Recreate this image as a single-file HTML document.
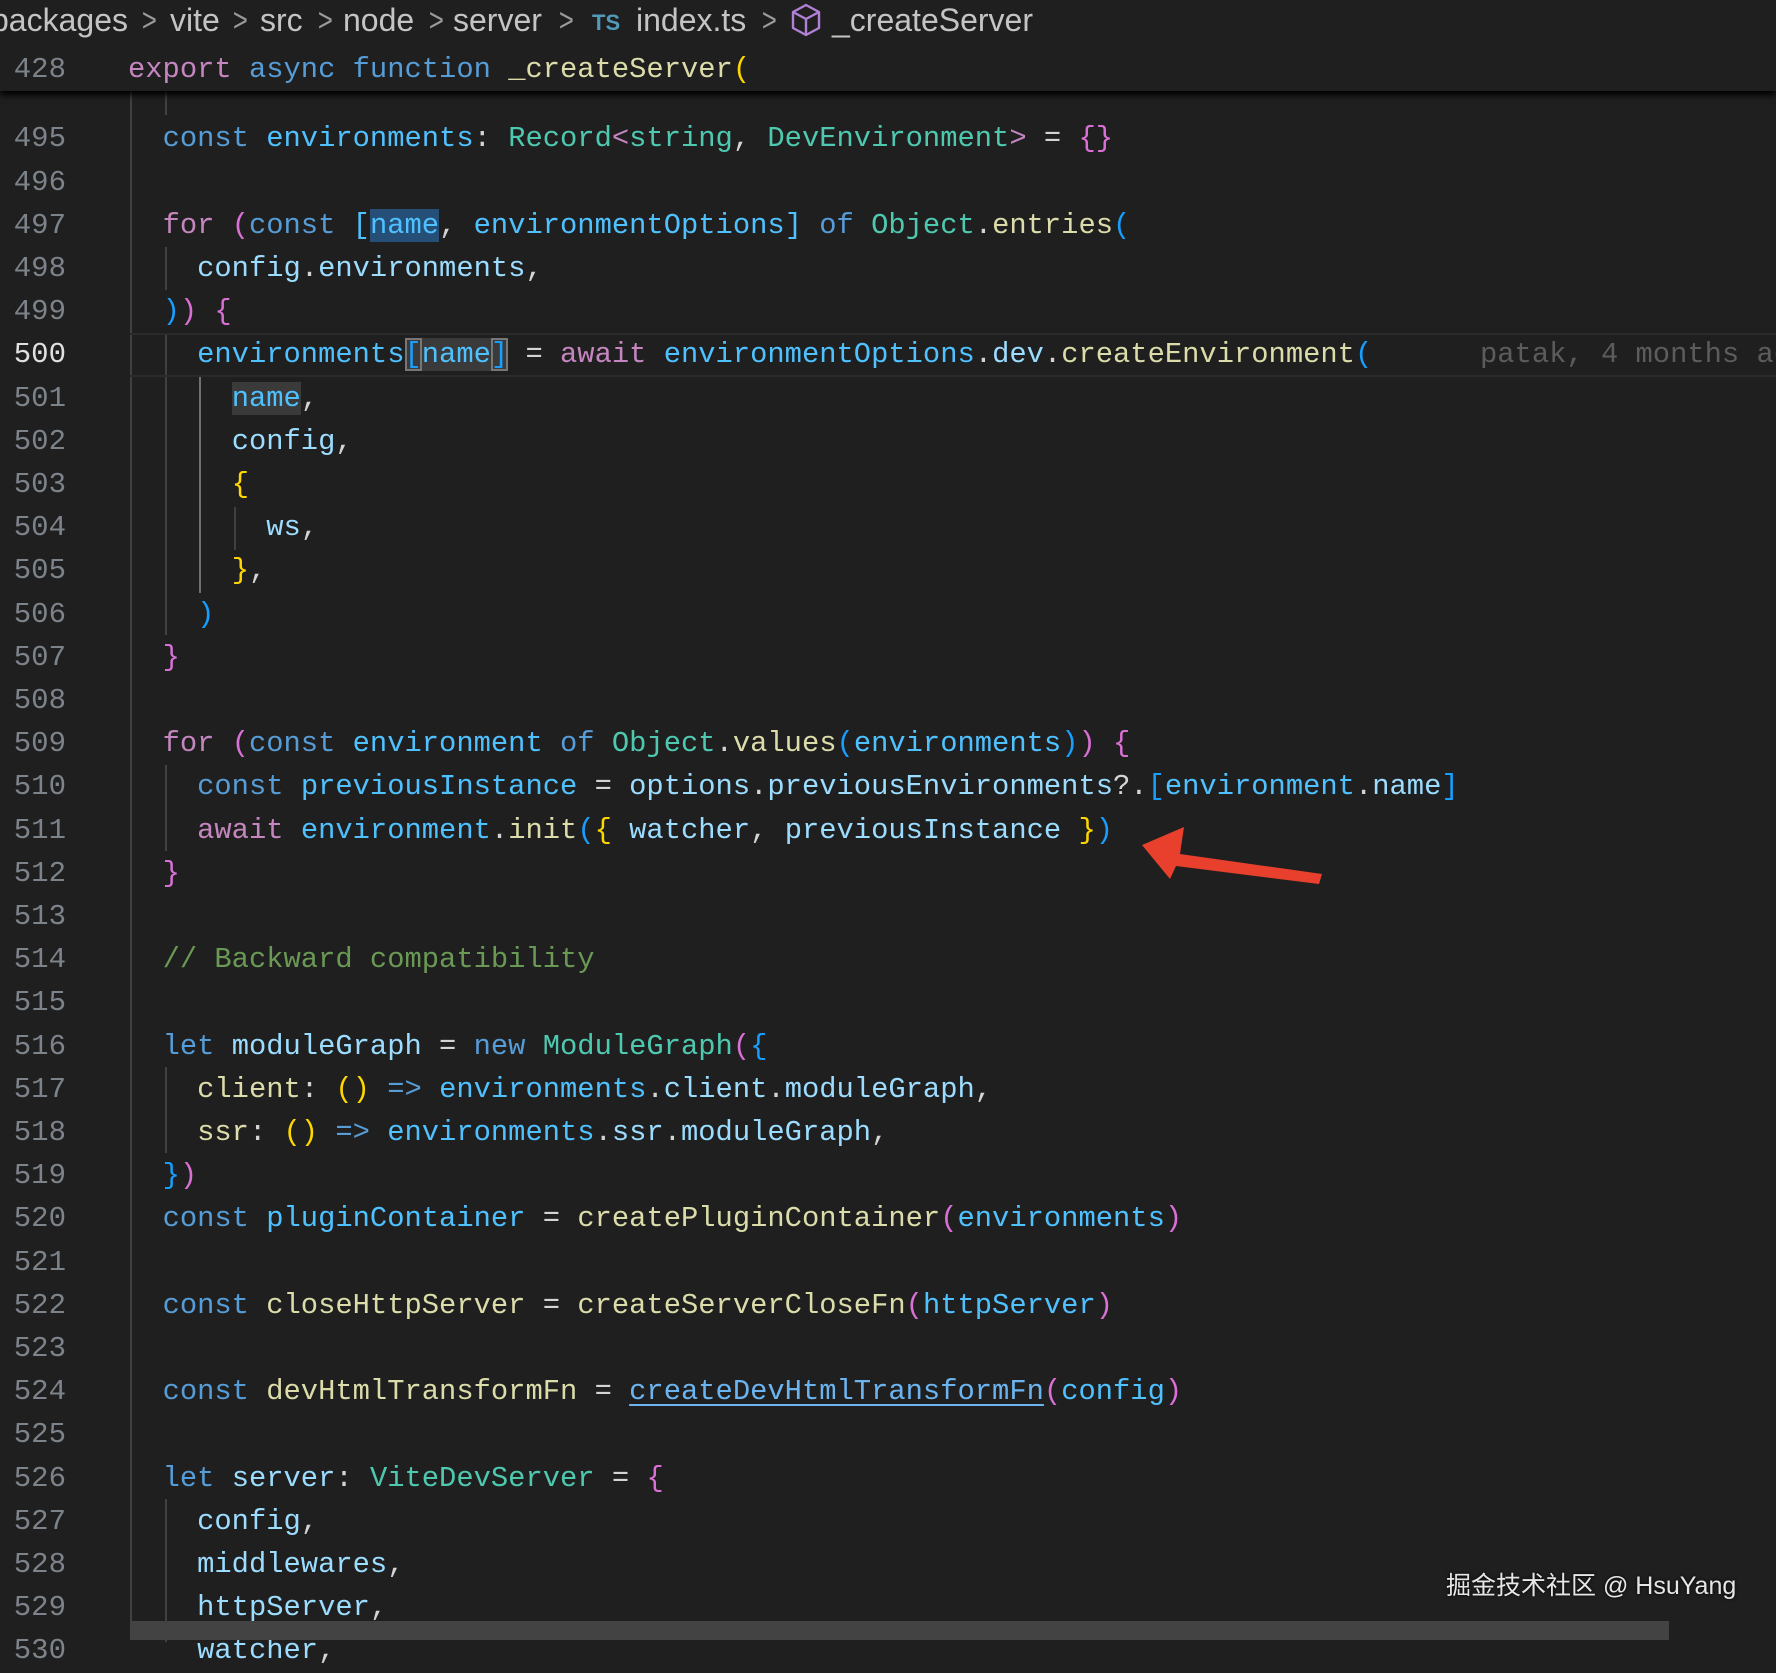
<!DOCTYPE html>
<html><head><meta charset="utf-8"><style>
html,body{margin:0;padding:0;}
body{width:1776px;height:1640px;background:#1f1f1f;overflow:hidden;position:relative;font-family:"Liberation Mono",monospace;}
.ln{position:absolute;left:0;width:66px;text-align:right;font-size:29px;color:#7d838a;line-height:43.2px;height:43.2px;}
.cd{position:absolute;left:128px;font-size:28.8px;line-height:43.2px;height:43.2px;white-space:pre;color:#d4d4d4;}
.k{color:#569cd6}.c{color:#c586c0}.v{color:#9cdcfe}.V{color:#4fc1ff}.t{color:#4ec9b0}.f{color:#dcdcaa}
.g1{color:#ffd700}.g2{color:#da70d6}.g3{color:#179fff}.cm{color:#6a9955}
.ig{position:absolute;width:2px;background:#404040;}
.bc{position:absolute;top:1px;font-family:"Liberation Sans",sans-serif;font-size:32px;color:#c4c4c4;line-height:38px;white-space:pre;}
.sp{color:#9a9a9a;transform:scaleX(0.8)}
</style></head><body>

<div style="position:absolute;left:0;top:2px;width:1776px;height:1638px">
<div class="ig" style="left:130px;top:89px;height:1549px"></div>
<div class="ig" style="left:165px;top:89px;height:24px"></div>
<div class="ig" style="left:165px;top:245px;height:43px"></div>
<div class="ig" style="left:165px;top:331px;height:302px"></div>
<div class="ig" style="left:199px;top:375px;height:216px;background:#707070"></div>
<div class="ig" style="left:234px;top:505px;height:43px"></div>
<div class="ig" style="left:165px;top:763px;height:86px"></div>
<div class="ig" style="left:165px;top:1065px;height:86px"></div>
<div class="ig" style="left:165px;top:1497px;height:143px"></div>

<div style="position:absolute;left:130px;right:0;top:331px;height:40px;border-top:2px solid #2a2a2a;border-bottom:2px solid #2a2a2a"></div>

<div class="ln" style="top:115.4px">495</div><div class="cd" style="top:115.4px">  <span class="k">const</span> <span class="V">environments</span>: <span class="t">Record</span><span class="c">&lt;</span><span class="t">string</span>, <span class="t">DevEnvironment</span><span class="c">&gt;</span> = <span class="g2">{}</span></div>
<div class="ln" style="top:158.6px">496</div>
<div class="ln" style="top:201.8px">497</div><div class="cd" style="top:201.8px">  <span class="c">for</span> <span class="g2">(</span><span class="k">const</span> <span class="V">[<span style="background:#264f78">name</span></span>, <span class="V">environmentOptions</span><span class="V">]</span> <span class="k">of</span> <span class="t">Object</span>.<span class="f">entries</span><span class="g3">(</span></div>
<div class="ln" style="top:245px">498</div><div class="cd" style="top:245px">    <span class="v">config</span>.<span class="v">environments</span>,</div>
<div class="ln" style="top:288.2px">499</div><div class="cd" style="top:288.2px">  <span class="g3">)</span><span class="g2">)</span> <span class="g2">{</span></div>
<div class="ln" style="top:331.4px;color:#e0e0e0">500</div><div class="cd" style="top:331.4px">    <span class="V">environments</span><span class="g3" style="outline:2px solid #777;outline-offset:-2px;background:#3a3a3a">[</span><span class="V" style="background:#3a3a3a">name</span><span class="g3" style="outline:2px solid #777;outline-offset:-2px;background:#3a3a3a">]</span> = <span class="c">await</span> <span class="V">environmentOptions</span>.<span class="v">dev</span>.<span class="f">createEnvironment</span><span class="g3">(</span></div>
<div class="cd" style="top:331.4px;left:1480px;color:#5c5c5c">patak, 4 months ago</div>
<div class="ln" style="top:374.6px">501</div><div class="cd" style="top:374.6px">      <span class="V" style="background:#3a3a3a">name</span>,</div>
<div class="ln" style="top:417.8px">502</div><div class="cd" style="top:417.8px">      <span class="v">config</span>,</div>
<div class="ln" style="top:461px">503</div><div class="cd" style="top:461px">      <span class="g1">{</span></div>
<div class="ln" style="top:504.2px">504</div><div class="cd" style="top:504.2px">        <span class="v">ws</span>,</div>
<div class="ln" style="top:547.4px">505</div><div class="cd" style="top:547.4px">      <span class="g1">}</span>,</div>
<div class="ln" style="top:590.6px">506</div><div class="cd" style="top:590.6px">    <span class="g3">)</span></div>
<div class="ln" style="top:633.8px">507</div><div class="cd" style="top:633.8px">  <span class="g2">}</span></div>
<div class="ln" style="top:677px">508</div>
<div class="ln" style="top:720.2px">509</div><div class="cd" style="top:720.2px">  <span class="c">for</span> <span class="g2">(</span><span class="k">const</span> <span class="V">environment</span> <span class="k">of</span> <span class="t">Object</span>.<span class="f">values</span><span class="g3">(</span><span class="V">environments</span><span class="g3">)</span><span class="g2">)</span> <span class="g2">{</span></div>
<div class="ln" style="top:763.4px">510</div><div class="cd" style="top:763.4px">    <span class="k">const</span> <span class="V">previousInstance</span> = <span class="v">options</span>.<span class="v">previousEnvironments</span>?.<span class="g3">[</span><span class="V">environment</span>.<span class="v">name</span><span class="g3">]</span></div>
<div class="ln" style="top:806.6px">511</div><div class="cd" style="top:806.6px">    <span class="c">await</span> <span class="V">environment</span>.<span class="f">init</span><span class="g3">(</span><span class="g1">{</span> <span class="v">watcher</span>, <span class="v">previousInstance</span> <span class="g1">}</span><span class="g3">)</span></div>
<div class="ln" style="top:849.8px">512</div><div class="cd" style="top:849.8px">  <span class="g2">}</span></div>
<div class="ln" style="top:893px">513</div>
<div class="ln" style="top:936.2px">514</div><div class="cd" style="top:936.2px">  <span class="cm">// Backward compatibility</span></div>
<div class="ln" style="top:979.4px">515</div>
<div class="ln" style="top:1022.6px">516</div><div class="cd" style="top:1022.6px">  <span class="k">let</span> <span class="v">moduleGraph</span> = <span class="k">new</span> <span class="t">ModuleGraph</span><span class="g2">(</span><span class="g3">{</span></div>
<div class="ln" style="top:1065.8px">517</div><div class="cd" style="top:1065.8px">    <span class="f">client</span>: <span class="g1">()</span> <span class="k">=&gt;</span> <span class="V">environments</span>.<span class="v">client</span>.<span class="v">moduleGraph</span>,</div>
<div class="ln" style="top:1109px">518</div><div class="cd" style="top:1109px">    <span class="f">ssr</span>: <span class="g1">()</span> <span class="k">=&gt;</span> <span class="V">environments</span>.<span class="v">ssr</span>.<span class="v">moduleGraph</span>,</div>
<div class="ln" style="top:1152.2px">519</div><div class="cd" style="top:1152.2px">  <span class="g3">}</span><span class="g2">)</span></div>
<div class="ln" style="top:1195.4px">520</div><div class="cd" style="top:1195.4px">  <span class="k">const</span> <span class="V">pluginContainer</span> = <span class="f">createPluginContainer</span><span class="g2">(</span><span class="V">environments</span><span class="g2">)</span></div>
<div class="ln" style="top:1238.6px">521</div>
<div class="ln" style="top:1281.8px">522</div><div class="cd" style="top:1281.8px">  <span class="k">const</span> <span class="f">closeHttpServer</span> = <span class="f">createServerCloseFn</span><span class="g2">(</span><span class="V">httpServer</span><span class="g2">)</span></div>
<div class="ln" style="top:1325px">523</div>
<div class="ln" style="top:1368.2px">524</div><div class="cd" style="top:1368.2px">  <span class="k">const</span> <span class="f">devHtmlTransformFn</span> = <span style="color:#6cb4f0;text-decoration:underline;text-underline-offset:5px">createDevHtmlTransformFn</span><span class="g2">(</span><span class="V">config</span><span class="g2">)</span></div>
<div class="ln" style="top:1411.4px">525</div>
<div class="ln" style="top:1454.6px">526</div><div class="cd" style="top:1454.6px">  <span class="k">let</span> <span class="v">server</span>: <span class="t">ViteDevServer</span> = <span class="g2">{</span></div>
<div class="ln" style="top:1497.8px">527</div><div class="cd" style="top:1497.8px">    <span class="v">config</span>,</div>
<div class="ln" style="top:1541px">528</div><div class="cd" style="top:1541px">    <span class="v">middlewares</span>,</div>
<div class="ln" style="top:1584.2px">529</div><div class="cd" style="top:1584.2px">    <span class="v">httpServer</span>,</div>
<div class="ln" style="top:1627.4px">530</div><div class="cd" style="top:1627.4px">    <span class="v">watcher</span>,</div>
</div>

<div style="position:absolute;left:130px;top:1621px;width:1539px;height:19px;background:#434343"></div>

<div style="position:absolute;left:1446px;top:1566px;font-family:'Liberation Sans','Noto Sans CJK SC',sans-serif;font-size:25px;color:#e6e6e6;text-shadow:0 0 3px #000;white-space:pre">掘金技术社区 @ HsuYang</div>

<svg style="position:absolute;left:0;top:0" width="1776" height="1640">
<polygon points="1142,845 1184,827 1180,854 1322,874 1319,884 1176,866 1170,879" fill="#e8402d"/>
</svg>

<div style="position:absolute;left:0;top:0;width:1776px;height:91px;background:#1f1f1f;box-shadow:0 4px 6px #000"></div>
<div class="bc" style="left:-9px">packages</div>
<div class="bc sp" style="left:140px">&gt;</div>
<div class="bc" style="left:170px">vite</div>
<div class="bc sp" style="left:231px">&gt;</div>
<div class="bc" style="left:260px">src</div>
<div class="bc sp" style="left:316px">&gt;</div>
<div class="bc" style="left:343px">node</div>
<div class="bc sp" style="left:427px">&gt;</div>
<div class="bc" style="left:453px">server</div>
<div class="bc sp" style="left:557px">&gt;</div>
<div class="bc" style="left:592px;font-size:22px;font-weight:bold;color:#519aba;top:4px">TS</div>
<div class="bc" style="left:636px">index.ts</div>
<div class="bc sp" style="left:760px">&gt;</div>
<svg style="position:absolute;left:790px;top:3px" width="32" height="34" viewBox="0 0 32 34"><path d="M16 2 L29 9 L29 25 L16 32 L3 25 L3 9 Z M3 9 L16 16 L29 9 M16 16 L16 32" fill="none" stroke="#b180d7" stroke-width="2.4" stroke-linejoin="round"/></svg>
<div class="bc" style="left:832px">_createServer</div>
<div class="ln" style="top:48.4px">428</div>
<div class="cd" style="top:48.4px"><span class="c">export</span> <span class="k">async</span> <span class="k">function</span> <span class="f">_createServer</span><span class="g1">(</span></div>
</body></html>
